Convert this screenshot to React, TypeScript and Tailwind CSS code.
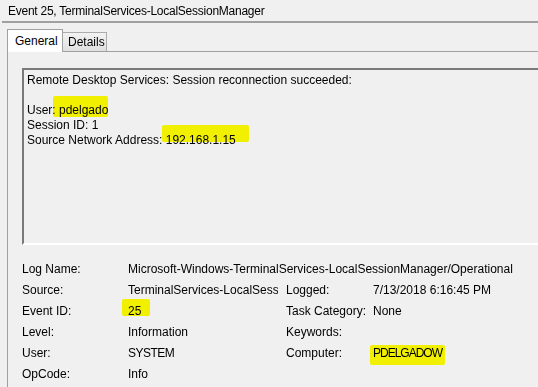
import React from 'react';

const rows: { label: string; value: string; label2?: string; value2?: string; wide?: boolean; clip?: boolean }[] = [
  { label: 'Log Name:', value: 'Microsoft-Windows-TerminalServices-LocalSessionManager/Operational', wide: true },
  { label: 'Source:', value: 'TerminalServices-LocalSessionManager', clip: true, label2: 'Logged:', value2: '7/13/2018 6:16:45 PM' },
  { label: 'Event ID:', value: '25', label2: 'Task Category:', value2: 'None' },
  { label: 'Level:', value: 'Information', label2: 'Keywords:', value2: '' },
  { label: 'User:', value: 'SYSTEM', label2: 'Computer:', value2: 'PDELGADOW' },
  { label: 'OpCode:', value: 'Info' },
];

const App: React.FC = () => {
  return (
    <div className="relative w-[538px] h-[387px] overflow-hidden bg-[#f0f0f0] text-[12px] text-black font-['Liberation_Sans',Arial,sans-serif]">
      {/* Window title */}
      <div className="h-[21px] pl-[8px] pt-[2px] leading-[19px] whitespace-nowrap tracking-[-0.25px]">
        Event 25, TerminalServices-LocalSessionManager
      </div>

      <div className="flex h-[366px]">
        <div className="w-[2px] bg-[#707070]" />
        <div className="flex-1 pl-[2px]">
          <div className="h-[2px] bg-[#a0a0a0]" />

          {/* Tabs */}
          <div className="flex items-end h-[28px] pl-[5px]">
            <div className="relative z-10 -mb-[1px] h-[23px] w-[56px] pl-[7px] pt-[2px] leading-[19px] bg-white border border-b-0 border-[#a0a0a0]">
              General
            </div>
            <div className="h-[19px] w-[45px] -ml-[1px] pl-[5px] pt-[1px] leading-[17px] border border-b-0 border-[#acacac] bg-gradient-to-b from-[#f2f2f2] to-[#e0e0e0]">
              Details
            </div>
          </div>

          {/* Tab panel */}
          <div className="ml-[5px] h-full border-t border-l border-[#a0a0a0] pl-[14px] pt-[16px]">
            <div className="h-[177px] w-[540px] border-t-2 border-l-2 border-t-[#7a7a7a] border-l-[#7a7a7a] border-b-2 border-b-white pl-[3px] pt-[3px] leading-[15px] whitespace-nowrap">
              <div>Remote Desktop Services: Session reconnection succeeded:</div>
              <div>&nbsp;</div>
              <div>User: pdelgado</div>
              <div>Session ID: 1</div>
              <div>Source Network Address: 192.168.1.15</div>
            </div>

            <div className="mt-[14px] grid grid-cols-[106px_158px_87px_1fr] auto-rows-[21px] leading-[21px] whitespace-nowrap">
              {rows.map((r) => (
                <React.Fragment key={r.label}>
                  <div>{r.label}</div>
                  {r.wide ? (
                    <div className="col-span-3">{r.value}</div>
                  ) : (
                    <>
                      <div className={r.clip ? 'w-[150px] overflow-hidden' : r.value === 'SYSTEM' ? 'tracking-[-0.5px]' : ''}>
                        {r.value}
                      </div>
                      <div>{r.label2 ?? ''}</div>
                      <div className={r.value2 === 'PDELGADOW' ? 'tracking-[-1px]' : ''}>{r.value2 ?? ''}</div>
                    </>
                  )}
                </React.Fragment>
              ))}
            </div>
          </div>
        </div>
      </div>

      {/* Yellow marker highlights drawn over the screenshot */}
      <div className="absolute left-[53px] top-[96px] w-[55px] h-[21px] bg-[#ffff00] mix-blend-multiply rounded-[2px]" />
      <div className="absolute left-[162px] top-[125px] w-[87px] h-[17px] bg-[#ffff00] mix-blend-multiply rounded-[2px]" />
      <div className="absolute left-[122px] top-[299px] w-[28px] h-[17px] bg-[#ffff00] mix-blend-multiply rounded-[2px]" />
      <div className="absolute left-[370px] top-[345px] w-[75px] h-[20px] bg-[#ffff00] mix-blend-multiply rounded-[2px]" />
    </div>
  );
};

export default App;
